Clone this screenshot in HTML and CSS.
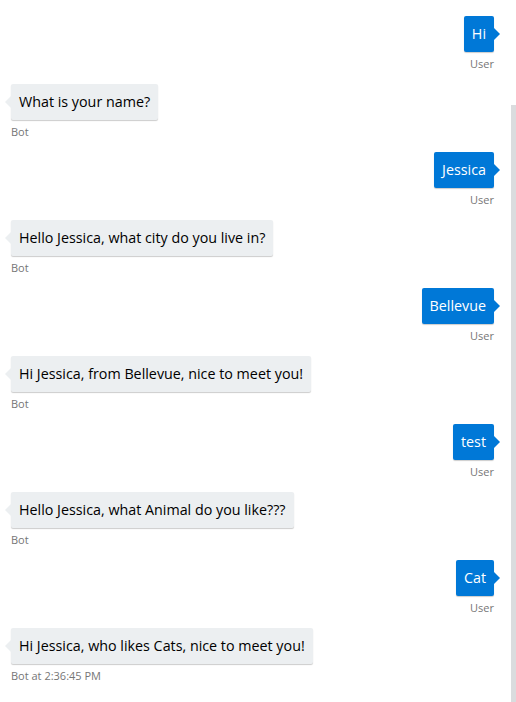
FILE: index.html
```html
<!DOCTYPE html>
<html>
<head>
<meta charset="utf-8">
<link rel="stylesheet" href="styles.css">
</head>
<body>
<div class="chat">
  <div class="from cut">Bot</div>

  <div class="msg user">
    <div class="bubble">Hi<svg class="tail" width="6" height="12" viewBox="0 0 6 12"><path d="M0 0 L6 6 L0 12 Z"/></svg></div>
    <div class="from">User</div>
  </div>
  <div class="msg bot">
    <div class="bubble"><svg class="tail" width="6" height="12" viewBox="0 0 6 12"><path d="M6 0 L0 6 L6 12 Z"/></svg>What is your name?</div>
    <div class="from">Bot</div>
  </div>
  <div class="msg user">
    <div class="bubble">Jessica<svg class="tail" width="6" height="12" viewBox="0 0 6 12"><path d="M0 0 L6 6 L0 12 Z"/></svg></div>
    <div class="from">User</div>
  </div>
  <div class="msg bot">
    <div class="bubble"><svg class="tail" width="6" height="12" viewBox="0 0 6 12"><path d="M6 0 L0 6 L6 12 Z"/></svg>Hello Jessica, what city do you live in?</div>
    <div class="from">Bot</div>
  </div>
  <div class="msg user">
    <div class="bubble">Bellevue<svg class="tail" width="6" height="12" viewBox="0 0 6 12"><path d="M0 0 L6 6 L0 12 Z"/></svg></div>
    <div class="from">User</div>
  </div>
  <div class="msg bot">
    <div class="bubble"><svg class="tail" width="6" height="12" viewBox="0 0 6 12"><path d="M6 0 L0 6 L6 12 Z"/></svg>Hi Jessica, from Bellevue, nice to meet you!</div>
    <div class="from">Bot</div>
  </div>
  <div class="msg user">
    <div class="bubble">test<svg class="tail" width="6" height="12" viewBox="0 0 6 12"><path d="M0 0 L6 6 L0 12 Z"/></svg></div>
    <div class="from">User</div>
  </div>
  <div class="msg bot">
    <div class="bubble"><svg class="tail" width="6" height="12" viewBox="0 0 6 12"><path d="M6 0 L0 6 L6 12 Z"/></svg>Hello Jessica, what Animal do you like???</div>
    <div class="from">Bot</div>
  </div>
  <div class="msg user">
    <div class="bubble">Cat<svg class="tail" width="6" height="12" viewBox="0 0 6 12"><path d="M0 0 L6 6 L0 12 Z"/></svg></div>
    <div class="from">User</div>
  </div>
  <div class="msg bot">
    <div class="bubble"><svg class="tail" width="6" height="12" viewBox="0 0 6 12"><path d="M6 0 L0 6 L6 12 Z"/></svg>Hi Jessica, who likes Cats, nice to meet you!</div>
    <div class="from">Bot at 2:36:45 PM</div>
  </div>
</div>
<div class="scrollbar"></div>
</body>
</html>
```
FILE: styles.css
```css
html, body {
  margin: 0;
  padding: 0;
  background: #ffffff;
  height: 100%;
  overflow: hidden;
}
body {
  font-family: "Open Sans", "Noto Sans", sans-serif;
  position: relative;
}
.chat {
  display: flex;
  flex-direction: column;
  padding: 0 22px 0 11px;
}
.msg {
  display: flex;
  flex-direction: column;
  margin-bottom: 12px;
}
.msg.user {
  align-items: flex-end;
}
.msg.bot {
  align-items: flex-start;
}
.bubble {
  position: relative;
  padding: 8px;
  font-size: 14.3px;
  line-height: 20px;
  border-radius: 2px;
  box-shadow: 0 1px 1px rgba(0, 0, 0, 0.2);
  white-space: nowrap;
}
.user .bubble {
  background: #0078d7;
  color: #ffffff;
}
.bot .bubble {
  background: #eceff1;
  color: #000000;
}
.tail {
  position: absolute;
  top: 12px;
}
.user .tail {
  right: -6px;
  fill: #0078d7;
}
.bot .tail {
  left: -6px;
  fill: #eceff1;
}
.from {
  margin-top: 4px;
  font-size: 11px;
  line-height: 16px;
  color: #767676;
}
.chat .cut {
  margin-top: -12px;
  margin-bottom: 12px;
}
.scrollbar {
  position: absolute;
  left: 511px;
  top: 105px;
  width: 5px;
  bottom: 0;
  background: #dadcde;
}
```
